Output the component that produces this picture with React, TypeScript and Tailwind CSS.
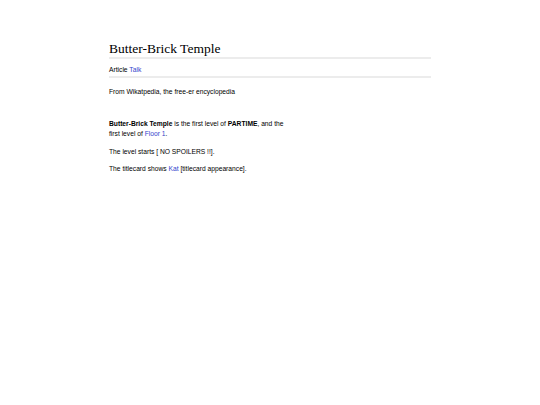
export default function App() {
  return (
    <div className="min-h-screen bg-white text-black" style={{ fontFamily: '"Liberation Sans", Arial, sans-serif' }}>
      <div className="ml-[109px] w-[322px] pt-[41px]">
        <h1 className="text-[13.5px] leading-[16px] font-['Liberation_Serif',serif] border-b-2 border-[#ececec]">
          Butter-Brick Temple
        </h1>
        <div className="text-[6.7px] leading-[10px] pt-[6px] pb-[1px] border-b-2 border-[#ececec]">
          Article <a className="text-[#3344cc]">Talk</a>
        </div>
        <p className="text-[6.7px] leading-[10px] mt-[9px]">From Wikatpedia, the free-er encyclopedia</p>
        <div className="w-[176px] mt-[22px] text-[6.7px] leading-[10px] space-y-[7.5px]">
          <p>
            <b>Butter-Brick Temple</b> is the first level of <b>PARTIME</b>, and the first level of{" "}
            <a className="text-[#3344cc]">Floor 1</a>.
          </p>
          <p>The level starts [ NO SPOILERS !!].</p>
          <p>
            The titlecard shows <a className="text-[#3344cc]">Kat</a> [titlecard appearance].
          </p>
        </div>
      </div>
    </div>
  );
}
